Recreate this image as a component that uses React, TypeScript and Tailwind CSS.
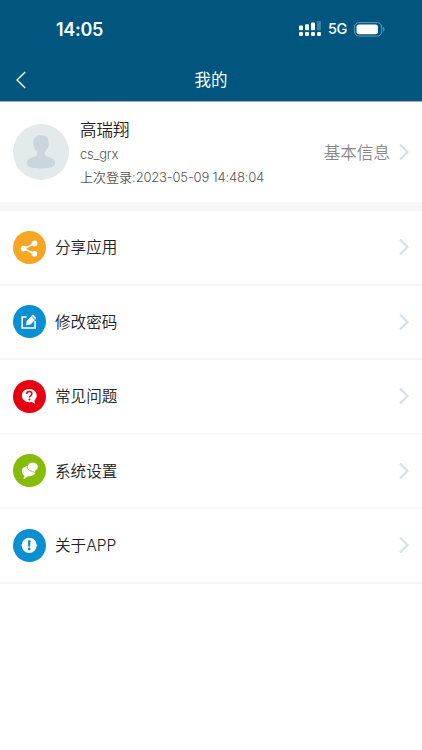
import type { ReactNode } from "react";

const menu: { label: string; color: string; icon: ReactNode }[] = [
  { label: "分享应用", color: "bg-[#f6a623]", icon: <ShareIcon /> },
  { label: "修改密码", color: "bg-[#0a8fd3]", icon: <EditIcon /> },
  { label: "常见问题", color: "bg-[#e60012]", icon: <QuestionIcon /> },
  { label: "系统设置", color: "bg-[#85bd04]", icon: <ChatIcon /> },
  { label: "关于APP", color: "bg-[#0a8fd3]", icon: <AboutIcon /> },
];

function ShareIcon() {
  return (
    <svg viewBox="0 0 33 33" className="size-full" fill="#fff" stroke="#fff">
      <path d="M21.5 12.5 10.7 17.800l10.800 5" fill="none" strokeWidth="1.6" />
      <circle cx="21.5" cy="12.4" r="2.8" stroke="none" />
      <circle cx="10.7" cy="17.6" r="2.9" stroke="none" />
      <circle cx="21.4" cy="22.8" r="2.9" stroke="none" />
    </svg>
  );
}

function EditIcon() {
  return (
    <svg viewBox="0 0 33 33" className="size-full" fill="none" stroke="#fff">
      <path d="M13.6 12H9.2v11h12.900v-7" strokeWidth="1.6" />
      <path d="m13 20.300.8-4.600 5-4.900 3.700 3.700-5 5z" fill="#fff" stroke="none" />
      <path d="m18.600 10.600 1.400-1.200 3.300 3.500-1.200 1.200" fill="#fff" stroke="none" />
      <path d="m18.500 11.300 3.500 3.600" stroke="#0a8fd3" strokeWidth="0.500" />
    </svg>
  );
}

function QuestionIcon() {
  return (
    <svg viewBox="0 0 33 33" className="size-full" fill="none">
      <path
        d="M16.3 9c4.200 0 7.400 2.800 7.400 6.500 0 2-.9 3.700-2.300 4.900l.6 3.400-3.300-1.900c-.8.2-1.600.3-2.400.3-4.200 0-7.400-2.900-7.400-6.700 0-3.700 3.200-6.500 7.400-6.500z"
        fill="#fff"
      />
      <path
        d="M13.700 13.900c0-1.500 1.100-2.300 2.600-2.300s2.600.9 2.600 2.200c0 1.800-2.400 1.800-2.400 3.600"
        stroke="#e60012"
        strokeWidth="1.500"
      />
      <circle cx="16.500" cy="19.500" r="1" fill="#e60012" />
    </svg>
  );
}

function ChatIcon() {
  return (
    <svg viewBox="0 0 33 33" className="size-full" fill="#fff">
      <path d="M15 12c-3.500 0-6.200 2.400-6.200 5.300 0 1.800 1 3.300 2.500 4.200-.1 1.200-.4 2.500-1 3.600 1.900-.4 3.200-1.600 4.100-2.700 4.500.2 8.400-2 8.400-5.200 0-2.900-3.400-5.200-7.800-5.200z" />
      <path
        d="M19.700 8.300c-3.200 0-5.500 1.900-5.500 4.400 0 2.700 2.400 4.600 5.500 4.600.6.8 1.500 1.400 3.100 1.500-.4-.6-.5-1.200-.5-1.900 1.800-.8 2.900-2.400 2.900-4.100 0-2.600-2.400-4.500-5.500-4.500z"
        stroke="#85bd04"
        strokeWidth="0.800"
      />
    </svg>
  );
}

function AboutIcon() {
  return (
    <svg viewBox="0 0 33 33" className="size-full">
      <circle cx="16.200" cy="16.300" r="7.600" fill="#fff" />
      <path d="M14.800 11.300h2.800l-.5 6.400h-1.800z" fill="#0a8fd3" />
      <circle cx="16.200" cy="20" r="1.400" fill="#0a8fd3" />
    </svg>
  );
}

function Chevron() {
  return (
    <svg viewBox="0 0 12 18" className="h-[18px] w-3 shrink-0" fill="none">
      <path d="m2 1.500 7.500 7.500L2 16.500" stroke="#d3e1ec" strokeWidth="2.200" />
    </svg>
  );
}

function StatusBar() {
  return (
    <div className="flex h-[58px] items-center justify-between pl-14 pr-[37px] text-white">
      <span className="pt-px text-[18px] font-semibold leading-none tracking-[-0.3px]">14:05</span>
      <div className="flex items-center">
        <svg viewBox="0 0 22 16" className="h-4 w-[22px]" fill="#fff">
          <rect x="0" y="4.500" width="4" height="4.700" rx="1" />
          <rect x="6" y="3.300" width="4" height="5.900" rx="1" />
          <rect x="12" y="1.500" width="4" height="7.700" rx="1" />
          <rect x="18" y="0" width="4" height="9.200" rx="1" opacity="0.25" />
          <rect x="0" y="11" width="4" height="4" rx="1.300" />
          <rect x="6" y="11" width="4" height="4" rx="1.300" />
          <rect x="12" y="11" width="4" height="4" rx="1.300" />
          <rect x="18" y="11" width="4" height="4" rx="1.300" />
        </svg>
        <span className="ml-[7px] w-5 pt-px text-[14.500px] font-medium leading-none tracking-[-0.4px]">5G</span>
        <svg viewBox="0 0 31 15" className="ml-[6px] h-[15px] w-[31px]">
          <rect x="0.600" y="0.600" width="27" height="13.500" rx="4.300" fill="none" stroke="#fff" strokeOpacity="0.4" />
          <rect x="2.500" y="2.400" width="21.500" height="9.900" rx="2.800" fill="#fff" />
          <path d="M29.200 5v4.600c1.700-.7 1.700-3.900 0-4.600z" fill="#fff" opacity="0.45" />
        </svg>
      </div>
    </div>
  );
}

export default function App() {
  return (
    <div className="h-[750px] w-full overflow-hidden bg-white font-['Inter','Noto_Sans_CJK_SC',sans-serif] font-[350] text-[#222]">
      <header className="h-[101px] border-b border-[#1f4a7c] bg-[#00567f]">
        <StatusBar />
        <div className="grid h-[43px] grid-cols-[1fr_auto_1fr] items-center px-4 text-white">
          <svg viewBox="0 0 10 18" className="h-[18px] w-[10px]" fill="none">
            <path d="M9.200 1 1 9l8.200 8" stroke="#fff" strokeWidth="1.500" />
          </svg>
          <h1 className="pt-0.5 text-[16.500px] font-normal leading-none">我的</h1>
        </div>
      </header>

      <section className="flex h-[101px] items-center border-t border-[#8fb0d4] pl-[13px] pr-3">
        <svg viewBox="0 0 56 56" className="size-14 shrink-0">
          <circle cx="28" cy="28" r="28" fill="#e3eaec" />
          <path
            d="M28 11c4.500 0 7.800 3.400 7.800 8.200 0 3.500-1.500 6.200-3.600 8.300-1 1.200-.8 3.400.5 4.200 3.300 1.900 9.500 2.300 9.500 7.900 0 3.500-5 4.900-14.200 4.900s-14.200-1.400-14.200-4.900c0-5.600 6.200-6 9.500-7.900 1.300-.8 1.500-3 .5-4.200-2.100-2.100-3.600-4.800-3.600-8.300 0-4.800 3.300-8.200 7.800-8.200z"
            fill="#cad6db"
          />
        </svg>
        <div className="ml-[11px] flex flex-col whitespace-nowrap pt-px">
          <p className="text-[16.500px] leading-[25px]">高瑞翔</p>
          <p className="text-[13px] leading-[23px] tracking-[-0.2px] text-[#555]">cs_grx</p>
          <p className="text-[13px] leading-[22px] text-[#555]">
            上次登录:<span className="tracking-[-0.18px]">2023-05-09 14:48:04</span>
          </p>
        </div>
        <span className="ml-auto mr-2 whitespace-nowrap pt-0.5 text-[16.600px] text-[#888]">基本信息</span>
        <Chevron />
      </section>

      <ul className="border-t-[9px] border-[#f7f7f7]">
        {menu.map((item) => (
          <li
            key={item.label}
            className="flex h-[74.500px] items-center border-b-2 border-[#f7f7f7] pl-[13px] pr-3"
          >
            <span className={`size-[33px] rounded-full ${item.color}`}>{item.icon}</span>
            <span className="ml-[9px] flex-1 pt-px text-[15.600px]">{item.label}</span>
            <Chevron />
          </li>
        ))}
      </ul>
    </div>
  );
}
